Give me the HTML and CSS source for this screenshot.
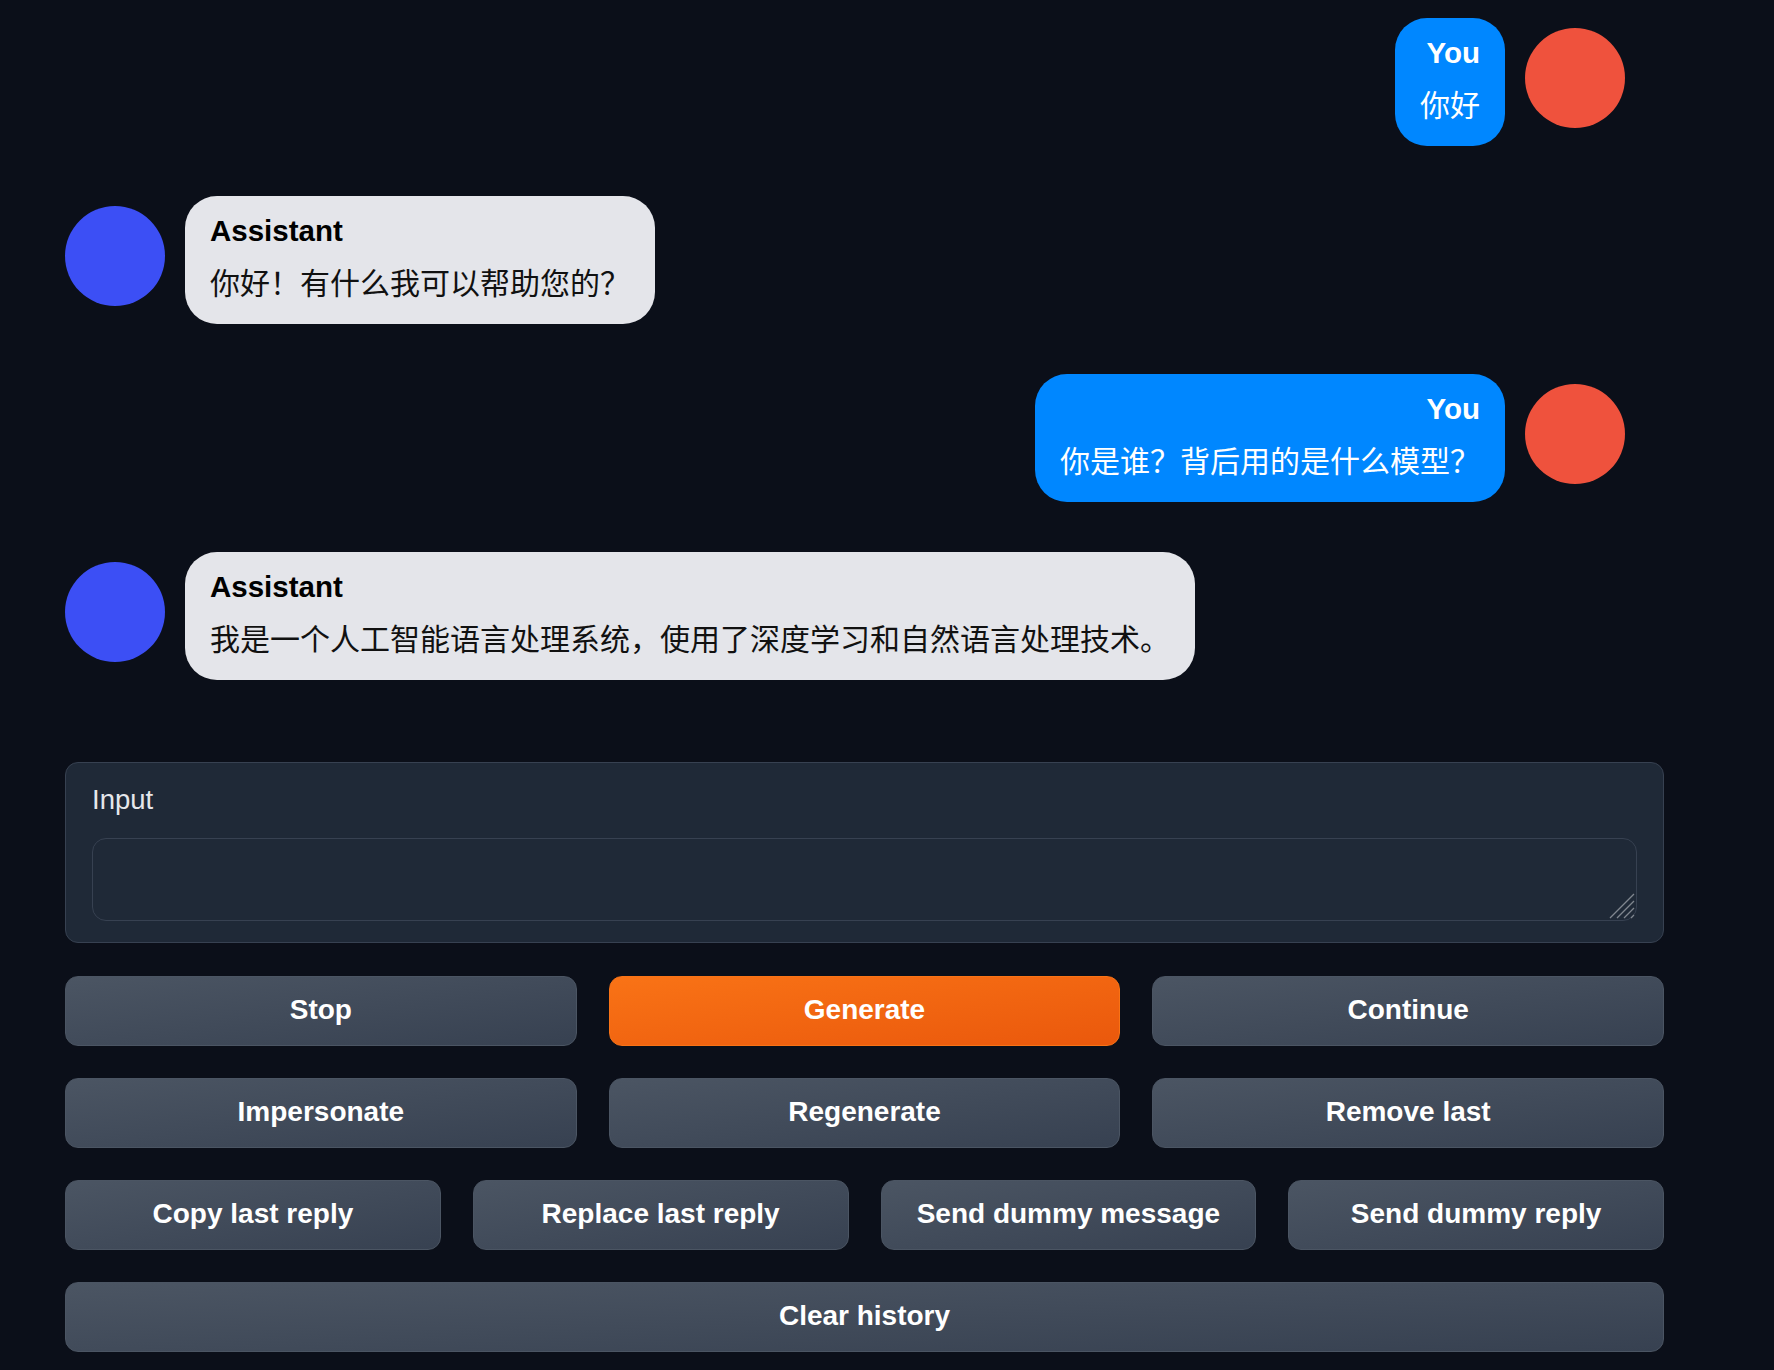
FILE: index.html
```html
<!DOCTYPE html>
<html lang="zh-CN">
<head>
<meta charset="utf-8">
<title>Chat</title>
<link rel="stylesheet" href="styles.css">
</head>
<body>
<div class="app">
  <div class="chat">
    <div class="msg user">
      <div class="bubble">
        <div class="name">You</div>
        <div class="text">你好</div>
      </div>
      <div class="avatar"></div>
    </div>
    <div class="msg bot">
      <div class="avatar"></div>
      <div class="bubble">
        <div class="name">Assistant</div>
        <div class="text">你好！有什么我可以帮助您的？</div>
      </div>
    </div>
    <div class="msg user">
      <div class="bubble">
        <div class="name">You</div>
        <div class="text">你是谁？背后用的是什么模型？</div>
      </div>
      <div class="avatar"></div>
    </div>
    <div class="msg bot">
      <div class="avatar"></div>
      <div class="bubble">
        <div class="name">Assistant</div>
        <div class="text">我是一个人工智能语言处理系统，使用了深度学习和自然语言处理技术。</div>
      </div>
    </div>
  </div>

  <div class="input-panel">
    <label class="label" for="msg">Input</label>
    <div class="ta-wrap">
      <textarea id="msg" class="ta"></textarea>
      <svg class="grip" viewBox="0 0 26 26" width="26" height="26" aria-hidden="true">
        <path d="M1 25 L25 1 M8 25 L25 8 M15 25 L25 15 M22 25 L25 22" stroke="#80868f" stroke-width="1.3" fill="none"/>
      </svg>
    </div>
  </div>

  <div class="controls">
    <div class="btn-row cols-3">
      <button class="btn">Stop</button>
      <button class="btn primary">Generate</button>
      <button class="btn">Continue</button>
    </div>
    <div class="btn-row cols-3">
      <button class="btn">Impersonate</button>
      <button class="btn">Regenerate</button>
      <button class="btn">Remove last</button>
    </div>
    <div class="btn-row cols-4">
      <button class="btn">Copy last reply</button>
      <button class="btn">Replace last reply</button>
      <button class="btn">Send dummy message</button>
      <button class="btn">Send dummy reply</button>
    </div>
    <div class="btn-row cols-1">
      <button class="btn">Clear history</button>
    </div>
  </div>
</div>
</body>
</html>
```

FILE: styles.css
```css
html, body {
  margin: 0;
  padding: 0;
  background: #0b0f19;
}

body {
  font-family: "Liberation Sans", "Noto Sans CJK SC", sans-serif;
  color: #e5e7eb;
}

.app {
  margin-left: 65px;
  width: 1599px;
}

/* ---------- chat ---------- */
.chat {
  display: flex;
  flex-direction: column;
  gap: 50px;
  padding-top: 18px;
  padding-right: 39px;
}

.msg {
  display: flex;
  align-items: flex-start;
  gap: 20px;
}

.msg.user {
  justify-content: flex-end;
}

.avatar {
  flex: none;
  width: 100px;
  height: 100px;
  border-radius: 50%;
  margin-top: 10px;
}

.user .avatar {
  background: #ef523d;
}

.bot .avatar {
  background: #3c4ff5;
}

.bubble {
  box-sizing: border-box;
  height: 128px;
  padding: 13px 25px 15px;
  border-radius: 32px;
}

.user .bubble {
  background: #0087ff;
  color: #ffffff;
  text-align: right;
}

.bot .bubble {
  background: #e4e5ea;
  color: #000000;
}

.name {
  font-family: "Liberation Sans", sans-serif;
  font-weight: 700;
  font-size: 29.5px;
  line-height: 44px;
  white-space: nowrap;
}

.text {
  font-family: "Noto Sans CJK SC", "Liberation Sans", sans-serif;
  font-size: 30px;
  line-height: 56px;
  white-space: nowrap;
}

.bot .text {
  color: #111111;
}

/* ---------- input panel ---------- */
.input-panel {
  margin-top: 82px;
  box-sizing: border-box;
  background: #1f2937;
  border: 1px solid #374151;
  border-radius: 13px;
  padding: 19px 26px 21px 26px;
}

.label {
  display: block;
  font-family: "Liberation Sans", sans-serif;
  font-size: 27.5px;
  line-height: 36px;
  color: #e5e7eb;
}

.ta-wrap {
  position: relative;
  margin-top: 20px;
}

.ta {
  display: block;
  box-sizing: border-box;
  width: 100%;
  height: 83px;
  margin: 0;
  padding: 12px 16px;
  background: #1f2937;
  border: 1px solid #374151;
  border-radius: 14px;
  color: #e5e7eb;
  font-family: "Liberation Sans", sans-serif;
  font-size: 28px;
  resize: none;
  outline: none;
}

.grip {
  position: absolute;
  right: 2px;
  bottom: 2px;
  pointer-events: none;
}

/* ---------- buttons ---------- */
.controls {
  margin-top: 33px;
  display: flex;
  flex-direction: column;
  gap: 32px;
}

.btn-row {
  display: grid;
  gap: 32px;
}

.cols-1 { grid-template-columns: 1fr; }
.cols-3 { grid-template-columns: repeat(3, 1fr); }
.cols-4 { grid-template-columns: repeat(4, 1fr); }

.btn {
  box-sizing: border-box;
  height: 70px;
  margin: 0;
  padding: 0 0 3px;
  border: 1px solid #4b5563;
  border-radius: 13px;
  background: linear-gradient(to bottom right, #4b5563, #374151);
  color: #ffffff;
  font-family: "Liberation Sans", sans-serif;
  font-weight: 700;
  font-size: 28px;
  cursor: pointer;
}

.btn.primary {
  border-color: #f97316;
  background: linear-gradient(to bottom right, #f97316, #ea580c);
}
```
